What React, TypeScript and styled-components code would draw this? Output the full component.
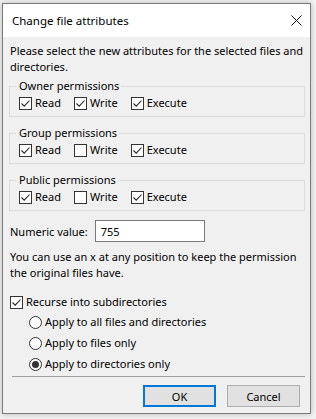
import React from "react";
import styled, { createGlobalStyle } from "styled-components";

const Global = createGlobalStyle`
  html, body { margin: 0; padding: 0; }
  body {
    background: #f3f3f3;
    font-family: "Noto Sans", "Open Sans", sans-serif;
    font-size: 11px;
    color: #000;
  }
  * { box-sizing: border-box; }
`;

const Page = styled.div`
  width: 316px;
  height: 419px;
  padding: 3px 0 0 2px;
  background: #f3f3f3;
`;

const Window = styled.div`
  width: 309px;
  height: 411px;
  border: 1px solid #7a7a7a;
  background: #f0f0f0;
  box-shadow: 0 0 6px rgba(0, 0, 0, 0.25);
  display: flex;
  flex-direction: column;
`;

const TitleBar = styled.div`
  height: 33px;
  background: #fff;
  display: flex;
  align-items: center;
  justify-content: space-between;
  padding: 0 8px 0 9px;
  font-size: 11.5px;
`;

const CloseBtn = styled.div`
  width: 12px;
  height: 12px;
  display: flex;
  align-items: center;
  justify-content: center;
`;

const Body = styled.div`
  flex: 1;
  display: flex;
  flex-direction: column;
  padding: 6px 5px 0 6px;
`;

const Para = styled.p<{ $top?: number }>`
  margin: ${(p) => p.$top ?? 0}px 0 0 0;
  line-height: 16px;
  padding-left: 1px;
`;

const Group = styled.fieldset<{ $top: number }>`
  margin: ${(p) => p.$top}px 0 0 0;
  padding: 1px 8px 5px 6px;
  border: 1px solid #dcdcdc;
  min-width: 0;
`;

const Legend = styled.legend`
  padding: 0 2px 0 3px;
  line-height: 16px;
`;

const Row = styled.div`
  display: flex;
  align-items: center;
  gap: 13px;
  padding-left: 3px;
  height: 16px;
`;

const CheckItem = styled.label`
  display: flex;
  align-items: center;
  gap: 3px;
  line-height: 16px;
`;

const Box = styled.span`
  width: 13px;
  height: 13px;
  border: 1px solid #333;
  background: #fff;
  display: inline-flex;
  align-items: center;
  justify-content: center;
`;

const Check = ({ on }: { on: boolean }) => (
  <Box>
    {on && (
      <svg width="11" height="11" viewBox="0 0 11 11">
        <path d="M1.5 5.5 L4.2 8.2 L9.5 2.5" fill="none" stroke="#222" strokeWidth="1.1" />
      </svg>
    )}
  </Box>
);

const NumRow = styled.div`
  display: flex;
  align-items: center;
  gap: 7px;
  margin-top: 9px;
  padding-left: 1px;
`;

const Input = styled.div`
  width: 110px;
  height: 22px;
  border: 1px solid #7a7a7a;
  background: #fff;
  padding: 0 5px;
  display: flex;
  align-items: center;
`;

const Recurse = styled(CheckItem)`
  margin-top: 13px;
  padding-left: 1px;
`;

const RadioList = styled.div`
  display: flex;
  flex-direction: column;
  gap: 5px;
  padding-left: 20px;
  margin-top: 4px;
`;

const RadioItem = styled.label`
  display: flex;
  align-items: center;
  gap: 3px;
  line-height: 16px;
`;

const Circle = styled.span`
  width: 13px;
  height: 13px;
  border-radius: 50%;
  border: 1px solid #333;
  background: #fff;
  display: inline-flex;
  align-items: center;
  justify-content: center;
`;

const Dot = styled.span`
  width: 7px;
  height: 7px;
  border-radius: 50%;
  background: #333;
`;

const Sep = styled.div`
  height: 1px;
  background: #a0a0a0;
  margin: 4px 0 0 3px;
`;

const Buttons = styled.div`
  display: flex;
  justify-content: flex-end;
  gap: 11px;
  margin-top: 8px;
  padding-right: 5px;
`;

const Btn = styled.div<{ $primary?: boolean }>`
  width: 73px;
  height: 22px;
  display: flex;
  align-items: center;
  justify-content: center;
  background: #e1e1e1;
  border: ${(p) => (p.$primary ? "2px solid #0078d7" : "1px solid #adadad")};
`;

const Radio = ({ on, children }: { on?: boolean; children: React.ReactNode }) => (
  <RadioItem>
    <Circle>{on && <Dot />}</Circle>
    {children}
  </RadioItem>
);

const PermGroup = ({
  title,
  write,
  top,
}: {
  title: string;
  write: boolean;
  top: number;
}) => (
  <Group $top={top}>
    <Legend>{title}</Legend>
    <Row>
      <CheckItem>
        <Check on />
        Read
      </CheckItem>
      <CheckItem>
        <Check on={write} />
        Write
      </CheckItem>
      <CheckItem>
        <Check on />
        Execute
      </CheckItem>
    </Row>
  </Group>
);

export default function App() {
  return (
    <Page>
      <Global />
      <Window>
        <TitleBar>
          <span>Change file attributes</span>
          <CloseBtn>
            <svg width="11" height="11" viewBox="0 0 11 11">
              <path d="M0.5 0.5 L10.5 10.5 M10.5 0.5 L0.5 10.5" stroke="#111" strokeWidth="1" />
            </svg>
          </CloseBtn>
        </TitleBar>
        <Body>
          <Para>
            Please select the new attributes for the selected files and directories.
          </Para>
          <PermGroup title="Owner permissions" write top={3} />
          <PermGroup title="Group permissions" write={false} top={8} />
          <PermGroup title="Public permissions" write={false} top={8} />
          <NumRow>
            Numeric value:
            <Input>755</Input>
          </NumRow>
          <Para $top={7}>
            You can use an x at any position to keep the permission the original files have.
          </Para>
          <Recurse>
            <Check on />
            Recurse into subdirectories
          </Recurse>
          <RadioList>
            <Radio>Apply to all files and directories</Radio>
            <Radio>Apply to files only</Radio>
            <Radio on>Apply to directories only</Radio>
          </RadioList>
          <Sep />
          <Buttons>
            <Btn $primary>OK</Btn>
            <Btn>Cancel</Btn>
          </Buttons>
        </Body>
      </Window>
    </Page>
  );
}
